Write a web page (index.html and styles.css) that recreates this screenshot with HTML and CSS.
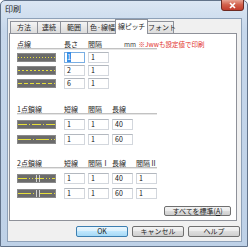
FILE: index.html
```html
<!DOCTYPE html>
<html lang="ja">
<head>
<meta charset="utf-8">
<title>印刷</title>
<link rel="stylesheet" href="styles.css">
</head>
<body>

<div class="window">
  <div class="titlebar">
    <span class="title">印刷</span>
    <span class="close">
      <svg width="23" height="11" viewBox="0 0 23 11">
        <defs>
          <linearGradient id="red" x1="0" y1="0" x2="0" y2="1">
            <stop offset="0" stop-color="#e8a493"/>
            <stop offset="0.45" stop-color="#d2604b"/>
            <stop offset="1" stop-color="#c0392a"/>
          </linearGradient>
        </defs>
        <path d="M0.5 0 V8 Q0.5 10.5 3 10.5 H20 Q22.5 10.5 22.5 8 V0" fill="url(#red)" stroke="#6d2a22"/>
        <path d="M9 3 L14 8 M14 3 L9 8" stroke="#fff" stroke-width="1.6"/>
      </svg>
    </span>
  </div>

  <div class="client">
    <div class="tabs">
      <span class="tab">方法</span>
      <span class="tab">連続</span>
      <span class="tab">範囲</span>
      <span class="tab">色·線幅</span>
      <span class="tab active">線ピッチ</span>
      <span class="tab">フォント</span>
    </div>

    <div class="panel">
      <div class="group g1">
        <div class="head">
          <span>点線</span><span>長さ</span><span>間隔</span>
          <span class="note">mm <em>※Jwwも設定値で印刷</em></span>
        </div>
        <div class="rows">
          <div class="row">
            <span class="preview"><svg width="39" height="9"><line x1="1" y1="4.5" x2="38" y2="4.5" stroke-dasharray="1 2"/></svg></span>
            <span class="field focus"><span class="sel">1</span></span>
            <span class="field">1</span>
          </div>
          <div class="row">
            <span class="preview"><svg width="39" height="9"><line x1="1" y1="4.5" x2="38" y2="4.5" stroke-dasharray="2 2"/></svg></span>
            <span class="field">2</span>
            <span class="field">1</span>
          </div>
          <div class="row">
            <span class="preview"><svg width="39" height="9"><line x1="1" y1="4.5" x2="38" y2="4.5" stroke-dasharray="4 2"/></svg></span>
            <span class="field">6</span>
            <span class="field">1</span>
          </div>
        </div>
      </div>

      <div class="group g2">
        <div class="head">
          <span>1点鎖線</span><span>短線</span><span>間隔</span><span>長線</span>
        </div>
        <div class="rows">
          <div class="row">
            <span class="preview"><svg width="39" height="9"><line x1="1" y1="4.5" x2="38" y2="4.5" stroke-dasharray="9 2 1 2"/></svg></span>
            <span class="field">1</span>
            <span class="field">1</span>
            <span class="field">40</span>
          </div>
          <div class="row">
            <span class="preview"><svg width="39" height="9"><line x1="1" y1="4.5" x2="38" y2="4.5" stroke-dasharray="13 2 1 2"/></svg></span>
            <span class="field">1</span>
            <span class="field">1</span>
            <span class="field">60</span>
          </div>
        </div>
      </div>

      <div class="group g3">
        <div class="head">
          <span>2点鎖線</span><span>短線</span><span>間隔Ⅰ</span><span>長線</span><span>間隔Ⅱ</span>
        </div>
        <div class="rows">
          <div class="row">
            <span class="preview"><svg width="39" height="9"><line x1="1" y1="4.5" x2="38" y2="4.5" stroke-dasharray="9 2 1 2 1 2"/><line class="tick" x1="19.5" y1="1" x2="19.5" y2="8"/><line class="tick" x1="22.5" y1="1" x2="22.5" y2="8"/></svg></span>
            <span class="field">1</span>
            <span class="field">1</span>
            <span class="field">40</span>
            <span class="field">1</span>
          </div>
          <div class="row">
            <span class="preview"><svg width="39" height="9"><line x1="1" y1="4.5" x2="38" y2="4.5" stroke-dasharray="13 2 1 2 1 2"/><line class="tick" x1="19.5" y1="1" x2="19.5" y2="8"/><line class="tick" x1="22.5" y1="1" x2="22.5" y2="8"/></svg></span>
            <span class="field">1</span>
            <span class="field">1</span>
            <span class="field">60</span>
            <span class="field">1</span>
          </div>
        </div>
      </div>

      <div class="reset">
        <span class="btn wide">すべてを標準(<u>A</u>)</span>
      </div>
    </div>

    <div class="buttons">
      <span class="btn default">OK</span>
      <span class="btn">キャンセル</span>
      <span class="btn">ヘルプ</span>
    </div>
  </div>
</div>

</body>
</html>
```

FILE: styles.css
```css
html, body {
  margin: 0;
  padding: 0;
}
body {
  width: 248px;
  height: 247px;
  overflow: hidden;
  background: #ffffff;
  color: #1e1e1e;
  font-family: "Noto Sans CJK JP", sans-serif;
  font-size: 7px;
}

.window {
  box-sizing: border-box;
  width: 248px;
  height: 247px;
  display: flex;
  flex-direction: column;
  background: linear-gradient(#dbe6f3, #c6d7eb 30px, #bed1e7);
  border: 1px solid #62738a;
  border-radius: 5px 5px 0 0;
}

.titlebar {
  height: 17px;
  flex: none;
  display: flex;
  justify-content: space-between;
  padding-left: 4px;
  padding-right: 3px;
}
.title {
  font-size: 8px;
  line-height: 15px;
  color: #1c1c1c;
}
.close {
  display: flex;
  margin-top: -1px;
}

.client {
  flex: 1;
  display: flex;
  flex-direction: column;
  margin: 0 5px 4px 6px;
  background: #f0f0f0;
  border: 1px solid #8ea1b8;
}

.tabs {
  display: flex;
  height: 14px;
  padding-left: 2px;
  align-items: flex-end;
}
.tab {
  box-sizing: border-box;
  height: 12px;
  line-height: 11px;
  text-align: center;
  border: 1px solid #8e9199;
  border-bottom: none;
  margin-right: -1px;
  background: linear-gradient(#f4f4f4, #e7e7e7 50%, #dcdcdc);
  white-space: nowrap;
}
.tab:nth-child(1) { width: 28px; }
.tab:nth-child(2) { width: 24px; }
.tab:nth-child(3) { width: 28px; }
.tab:nth-child(4) { width: 31px; }
.tab:nth-child(5) { width: 31px; }
.tab:nth-child(6) { width: 27px; }
.tab.active {
  position: relative;
  height: 15px;
  line-height: 13px;
  margin: 0 -1px -1px -2px;
  width: 33px;
  letter-spacing: -0.3px;
  background: #ffffff;
  z-index: 1;
}

.panel {
  flex: 1;
  margin: 0 4px 0 1px;
  padding: 6px 5px 0 7px;
  background: #ffffff;
  border: 1px solid #8e9199;
  display: flex;
  flex-direction: column;
}

.head,
.row {
  display: grid;
  grid-template-columns: 47px 24px 24px 24px 21px;
  align-items: center;
}
.head {
  width: 140px;
  height: 8px;
  line-height: 8px;
  border-bottom: 1px solid #c2c2c2;
  box-shadow: 0 1px 0 #e6e6e6;
  white-space: nowrap;
}
.note {
  grid-column: 4 / span 2;
  margin-left: 12px;
  color: #3a3a3a;
  font-size: 6.5px;
}
.note em {
  font-style: normal;
  color: #e2312c;
  margin-left: 1px;
}

.rows {
  display: grid;
}
.g1 .rows { margin-top: 3px; row-gap: 2px; }
.g2 { margin-top: 16px; }
.g3 { margin-top: 14px; }
.g2 .rows,
.g3 .rows { margin-top: 5px; row-gap: 4px; }

.row {
  height: 11px;
}
.preview {
  box-sizing: border-box;
  width: 39px;
  height: 9px;
  background: #6b6b6b;
  border: 1px solid #8a8a8a;
  display: flex;
  align-items: center;
  overflow: hidden;
}
.preview svg {
  margin: -1px;
  display: block;
}
.preview line {
  stroke: #e6df3a;
  stroke-width: 1;
}
.preview line.tick {
  stroke: #d4d4d4;
}

.field {
  box-sizing: border-box;
  width: 21px;
  height: 11px;
  line-height: 9px;
  padding-left: 2px;
  border: 1px solid #d3d7dd;
  border-top-color: #b3b8bf;
  background: #ffffff;
  color: #111111;
}
.field.focus {
  border-color: #79aee3;
}
.sel {
  background: #3a8ee6;
  color: #ffffff;
}

.reset {
  margin-top: 7px;
  display: flex;
  justify-content: flex-end;
}

.btn {
  box-sizing: border-box;
  width: 52px;
  height: 11px;
  line-height: 9px;
  text-align: center;
  border: 1px solid #707070;
  border-radius: 2px;
  background: linear-gradient(#f3f3f3, #ebebeb 45%, #dddddd 50%, #cfcfcf);
  white-space: nowrap;
}
.btn.wide {
  width: 67px;
  height: 10px;
  line-height: 8px;
}
.btn.default {
  border-color: #3c7fb1;
  background: linear-gradient(#eaf6fd, #d9f0fc 45%, #bee6fd 50%, #a7d9f5);
}

.buttons {
  display: flex;
  justify-content: flex-end;
  gap: 4px;
  margin: 5px 1px 4px 0;
}
```
